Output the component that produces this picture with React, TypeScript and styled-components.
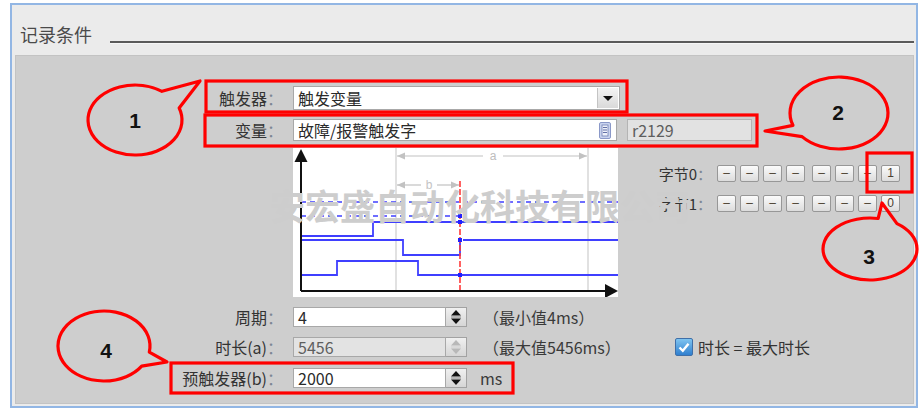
import React from 'react';
import styled, { createGlobalStyle } from 'styled-components';

const Global = createGlobalStyle`
  html, body { margin: 0; padding: 0; background: #ffffff; }
  body { font-family: "Noto Sans CJK SC", "Noto Sans", sans-serif; }
  #root { width: 923px; height: 412px; position: relative; overflow: hidden; }
`;

const Page = styled.div`
  position: relative;
  width: 923px;
  height: 412px;
  padding: 3px 0 0 10px;
  box-sizing: border-box;
`;

const Window = styled.div`
  width: 908px;
  height: 405px;
  box-sizing: border-box;
  border: 2px solid #92b6e4;
  background: #ebebeb;
  display: flex;
  flex-direction: column;
`;

const Header = styled.div`
  height: 50px;
  flex-shrink: 0;
  display: flex;
  align-items: flex-start;
  padding-left: 8px;
`;

const Title = styled.div`
  margin-top: 17px;
  font-size: 18px;
  line-height: 24px;
  color: #4a4a4a;
  white-space: nowrap;
`;

const Rule = styled.div`
  flex: 1;
  margin: 36px 2px 0 18px;
  border-top: 2px solid #5a5a5a;
  border-bottom: 1px solid #f6f6f6;
`;

const Panel = styled.div`
  flex: 1;
  margin: 0 2px 2px 3px;
  background: #cecece;
  border: 1px solid #c3c3c3;
  padding-top: 30px;
  box-sizing: border-box;
`;

const Row = styled.div<{ $mt: number; $h: number }>`
  display: flex;
  align-items: center;
  margin-top: ${p => p.$mt}px;
  height: ${p => p.$h}px;
`;

const Label = styled.div`
  width: 267px;
  margin-right: 10px;
  flex-shrink: 0;
  text-align: right;
  font-size: 16px;
  line-height: 20px;
  color: #333333;
  white-space: nowrap;
`;

const Colon = styled.span`
  color: #7d8794;
`;

const Select = styled.div`
  width: 327px;
  height: 24px;
  box-sizing: border-box;
  background: #ffffff;
  border: 1px solid #a8a8a8;
  display: flex;
  align-items: center;
`;

const FieldText = styled.div<{ $muted?: boolean }>`
  flex: 1;
  padding-left: 4px;
  font-size: 16px;
  line-height: 20px;
  color: ${p => (p.$muted ? '#5e5e5e' : '#2a2a2a')};
  white-space: nowrap;
`;

const DropBtn = styled.div`
  width: 21px;
  height: 20px;
  margin-right: 1px;
  box-sizing: border-box;
  border-left: 1px solid #c4c4c4;
  background: linear-gradient(#f4f4f4, #d9d9d9);
  display: flex;
  align-items: center;
  justify-content: center;
`;

const DownTri = styled.span`
  width: 0;
  height: 0;
  border-left: 5px solid transparent;
  border-right: 5px solid transparent;
  border-top: 5px solid #111;
`;

const TextInput = styled.div<{ $w: number; $disabled?: boolean }>`
  width: ${p => p.$w}px;
  height: 100%;
  box-sizing: border-box;
  background: ${p => (p.$disabled ? '#e3e3e3' : '#ffffff')};
  border: 1px solid #a8a8a8;
  display: flex;
  align-items: center;
  flex-shrink: 0;
`;

const BrowseIcon = styled.div`
  width: 16px;
  height: 18px;
  margin-right: 3px;
  display: flex;
  align-items: center;
  justify-content: center;
`;

const ReadOnlyField = styled.div`
  width: 125px;
  height: 100%;
  margin-left: 10px;
  box-sizing: border-box;
  background: #e2e2e2;
  border: 1px solid #b4b4b4;
  display: flex;
  align-items: center;
`;

const ChartRow = styled.div`
  display: flex;
  align-items: flex-start;
  margin-top: 7px;
`;

const LabelSpacer = styled.div`
  width: 277px;
  flex-shrink: 0;
`;

const Chart = styled.div`
  width: 325px;
  height: 149px;
  background: #ffffff;
  flex-shrink: 0;
`;

const ByteBlock = styled.div`
  margin-left: 24px;
  margin-top: 17px;
  display: flex;
  flex-direction: column;
  gap: 13px;
`;

const ByteRow = styled.div`
  display: flex;
  align-items: center;
  height: 17px;
`;

const ByteLabel = styled.div`
  width: 70px;
  margin-right: 5px;
  text-align: right;
  font-size: 15px;
  line-height: 17px;
  color: #333;
  white-space: nowrap;
`;

const ByteBtn = styled.div<{ $gap: number }>`
  width: 19px;
  height: 17px;
  margin-left: ${p => p.$gap}px;
  box-sizing: border-box;
  border: 1px solid #979797;
  border-radius: 2px;
  background: linear-gradient(#fbfbfb, #dcdcdc);
  font-family: "Liberation Sans", Arial, sans-serif;
  font-size: 12px;
  line-height: 15px;
  text-align: center;
  color: #4a4030;
`;

const SpinBtn = styled.div`
  width: 21px;
  height: 100%;
  box-sizing: border-box;
  border: 1px solid #a2a2a2;
  border-left: none;
  background: linear-gradient(#f0f0f0, #d6d6d6);
  display: flex;
  align-items: center;
  justify-content: center;
  flex-shrink: 0;
`;

const Note = styled.div<{ $w?: number; $ml: number }>`
  margin-left: ${p => p.$ml}px;
  width: ${p => (p.$w ? `${p.$w}px` : 'auto')};
  font-size: 16px;
  line-height: 20px;
  color: #3a3a3a;
  white-space: nowrap;
  flex-shrink: 0;
`;

const CheckBox = styled.div`
  width: 18px;
  height: 18px;
  box-sizing: border-box;
  border: 1px solid #3f6fa8;
  border-radius: 2px;
  background: linear-gradient(#7fc4f0, #2f7fcf);
  display: flex;
  align-items: center;
  justify-content: center;
  flex-shrink: 0;
`;

const CheckText = styled.div`
  margin-left: 5px;
  font-size: 16px;
  line-height: 20px;
  color: #333;
  white-space: nowrap;
`;

const Watermark = styled.div`
  position: absolute;
  left: 270px;
  top: 187px;
  font-family: "Noto Sans CJK SC", sans-serif;
  font-weight: 700;
  font-size: 35px;
  line-height: 35px;
  color: #cdcdcd;
  white-space: nowrap;
  pointer-events: none;
`;

const Annotations = styled.svg`
  position: absolute;
  left: 0;
  top: 0;
  pointer-events: none;
`;

const Spinner = ({ disabled }: { disabled?: boolean }) => {
  const c = disabled ? '#b8b8b8' : '#111';
  return (
    <SpinBtn>
      <svg width="12" height="16" viewBox="0 0 12 16">
        <polygon points="6,1 11,6.5 1,6.5" fill={c} />
        <line x1="1" y1="8" x2="11" y2="8" stroke={disabled ? '#cfcfcf' : '#888'} strokeWidth="1" />
        <polygon points="6,15 11,9.5 1,9.5" fill={c} />
      </svg>
    </SpinBtn>
  );
};

const ChartGraph = () => {
  const blue = '#3f3fff';
  return (
    <svg width="325" height="149" viewBox="0 0 325 149">
      <line x1="103" y1="0" x2="103" y2="143" stroke="#cdcdcd" strokeWidth="1.2" />
      <line x1="295" y1="0" x2="295" y2="143" stroke="#cdcdcd" strokeWidth="1.2" />
      <line x1="104" y1="8" x2="190" y2="8" stroke="#c2c2c2" strokeWidth="1.2" />
      <line x1="210" y1="8" x2="294" y2="8" stroke="#c2c2c2" strokeWidth="1.2" />
      <polygon points="104,8 112,4.5 112,11.5" fill="#c2c2c2" />
      <polygon points="294,8 286,4.5 286,11.5" fill="#c2c2c2" />
      <text x="200" y="12" fontSize="12" fill="#bdbdbd" textAnchor="middle" fontFamily="Liberation Sans, Arial, sans-serif">a</text>
      <line x1="104" y1="37" x2="128" y2="37" stroke="#c2c2c2" strokeWidth="1.2" />
      <line x1="144" y1="37" x2="166" y2="37" stroke="#c2c2c2" strokeWidth="1.2" />
      <polygon points="104,37 112,33.5 112,40.5" fill="#c2c2c2" />
      <polygon points="166,37 158,33.5 158,40.5" fill="#c2c2c2" />
      <text x="136" y="41" fontSize="12" fill="#c4c4c4" textAnchor="middle" fontFamily="Liberation Sans, Arial, sans-serif">b</text>
      <line x1="8" y1="54" x2="325" y2="54" stroke={blue} strokeWidth="1.6" strokeDasharray="5 4" />
      <line x1="8" y1="68" x2="165" y2="68" stroke={blue} strokeWidth="1.6" strokeDasharray="5 4" />
      <polyline points="8,88 80,88 80,74 325,74" fill="none" stroke={blue} strokeWidth="1.8" />
      <polyline points="8,92 110,92 110,107 167,107 167,92" fill="none" stroke={blue} strokeWidth="1.8" />
      <line x1="170" y1="92" x2="325" y2="92" stroke={blue} strokeWidth="1.8" />
      <polyline points="8,127 44,127 44,113 125,113 125,127 325,127" fill="none" stroke={blue} strokeWidth="1.8" />
      <line x1="167" y1="33" x2="167" y2="143" stroke="#ff3a3a" strokeWidth="1.6" strokeDasharray="6 2" />
      {[68, 74, 92, 127].map(y => (
        <rect key={y} x="165" y={y - 2} width="4" height="4" fill="#2020ff" />
      ))}
      <line x1="8" y1="143" x2="8" y2="10" stroke="#111" strokeWidth="2" />
      <polygon points="8,1 1.5,14 14.5,14" fill="#111" />
      <line x1="8" y1="143" x2="314" y2="143" stroke="#111" strokeWidth="2" />
      <polygon points="325,143 312,136 312,150" fill="#111" />
    </svg>
  );
};

type CalloutProps = { cx: number; cy: number; rx: number; ry: number; a1: number; a2: number; tip: [number, number]; label: string; tx: number; ty: number };

const pt = (cx: number, cy: number, rx: number, ry: number, deg: number) => {
  const r = (deg * Math.PI) / 180;
  return [cx + rx * Math.cos(r), cy + ry * Math.sin(r)];
};

const Callout = ({ cx, cy, rx, ry, a1, a2, tip, label, tx, ty }: CalloutProps) => {
  const [x1, y1] = pt(cx, cy, rx, ry, a1);
  const [x2, y2] = pt(cx, cy, rx, ry, a2);
  const d = `M ${x1} ${y1} A ${rx} ${ry} 0 1 1 ${x2} ${y2} L ${tip[0]} ${tip[1]} Z`;
  return (
    <g>
      <path d={d} fill="none" stroke="#ff0000" strokeWidth="3.2" strokeLinejoin="round" />
      <text x={tx} y={ty} fontFamily="Liberation Sans, Arial, sans-serif" fontWeight="700" fontSize="21" fill="#111" textAnchor="middle">{label}</text>
    </g>
  );
};

const bits0 = ['–', '–', '–', '–', '–', '–', '–', '1'];
const bits1 = ['–', '–', '–', '–', '–', '–', '–', '0'];

const ByteButtons = ({ bits }: { bits: string[] }) => (
  <>
    {bits.map((b, i) => (
      <ByteBtn key={i} $gap={i === 0 ? 0 : i === 4 ? 7 : 4}>{b}</ByteBtn>
    ))}
  </>
);

export default function App() {
  return (
    <Page>
      <Global />
      <Window>
        <Header>
          <Title>记录条件</Title>
          <Rule />
        </Header>
        <Panel>
          <Row $mt={0} $h={24}>
            <Label>触发器<Colon>：</Colon></Label>
            <Select>
              <FieldText>触发变量</FieldText>
              <DropBtn><DownTri /></DropBtn>
            </Select>
          </Row>
          <Row $mt={9} $h={22}>
            <Label>变量<Colon>：</Colon></Label>
            <TextInput $w={324}>
              <FieldText>故障/报警触发字</FieldText>
              <BrowseIcon>
                <svg width="14" height="17" viewBox="0 0 14 17">
                  <rect x="1.5" y="0.5" width="11" height="16" rx="1.5" fill="#c9d3ee" stroke="#8a98c8" />
                  <rect x="4" y="3" width="6" height="11" fill="#eef1fa" stroke="#6f7fb5" strokeWidth="0.8" />
                  <line x1="5" y1="5.5" x2="9" y2="5.5" stroke="#3e4f90" strokeWidth="0.8" />
                  <line x1="5" y1="8" x2="9" y2="8" stroke="#3e4f90" strokeWidth="0.8" />
                  <line x1="5" y1="10.5" x2="9" y2="10.5" stroke="#3e4f90" strokeWidth="0.8" />
                </svg>
              </BrowseIcon>
            </TextInput>
            <ReadOnlyField>
              <FieldText $muted>r2129</FieldText>
            </ReadOnlyField>
          </Row>
          <ChartRow>
            <LabelSpacer />
            <Chart>
              <ChartGraph />
            </Chart>
            <ByteBlock>
              <ByteRow>
                <ByteLabel>字节0<Colon>：</Colon></ByteLabel>
                <ByteButtons bits={bits0} />
              </ByteRow>
              <ByteRow>
                <ByteLabel>字节1<Colon>：</Colon></ByteLabel>
                <ByteButtons bits={bits1} />
              </ByteRow>
            </ByteBlock>
          </ChartRow>
          <Row $mt={10} $h={20}>
            <Label>周期<Colon>：</Colon></Label>
            <TextInput $w={153}>
              <FieldText>4</FieldText>
            </TextInput>
            <Spinner />
            <Note $ml={16}>（最小值4ms）</Note>
          </Row>
          <Row $mt={10} $h={20}>
            <Label>时长(a)<Colon>：</Colon></Label>
            <TextInput $w={153} $disabled>
              <FieldText $muted>5456</FieldText>
            </TextInput>
            <Spinner disabled />
            <Note $ml={16} $w={192}>（最大值5456ms）</Note>
            <CheckBox>
              <svg width="12" height="11" viewBox="0 0 12 11">
                <polyline points="1.5,5.5 4.8,8.8 10.5,1.8" fill="none" stroke="#ffffff" strokeWidth="2.4" />
              </svg>
            </CheckBox>
            <CheckText>时长 = 最大时长</CheckText>
          </Row>
          <Row $mt={11} $h={20}>
            <Label>预触发器(b)<Colon>：</Colon></Label>
            <TextInput $w={153}>
              <FieldText>2000</FieldText>
            </TextInput>
            <Spinner />
            <Note $ml={13}>ms</Note>
          </Row>
        </Panel>
      </Window>
      <Watermark>安宏盛自动化科技有限公司</Watermark>
      <Annotations width="923" height="412" viewBox="0 0 923 412">
        <rect x="206" y="81" width="421" height="31" fill="none" stroke="#ff0000" strokeWidth="3.2" />
        <rect x="205" y="115" width="552" height="31" fill="none" stroke="#ff0000" strokeWidth="3.2" />
        <rect x="867" y="153" width="45" height="39" fill="none" stroke="#ff0000" strokeWidth="3.2" />
        <rect x="171" y="363" width="342" height="30" fill="none" stroke="#ff0000" strokeWidth="3.2" />
        <Callout cx={135} cy={120} rx={47} ry={35} a1={-20} a2={-55} tip={[200, 81]} label="1" tx={135} ty={128} />
        <Callout cx={839} cy={113} rx={49} ry={36} a1={160} a2={139} tip={[765, 131]} label="2" tx={838} ty={120} />
        <Callout cx={870} cy={249} rx={47} ry={31} a1={-55} a2={-80} tip={[882, 203]} label="3" tx={869} ty={264} />
        <Callout cx={104} cy={346} rx={46} ry={35} a1={35} a2={10} tip={[167, 362]} label="4" tx={106} ty={358} />
      </Annotations>
    </Page>
  );
}
